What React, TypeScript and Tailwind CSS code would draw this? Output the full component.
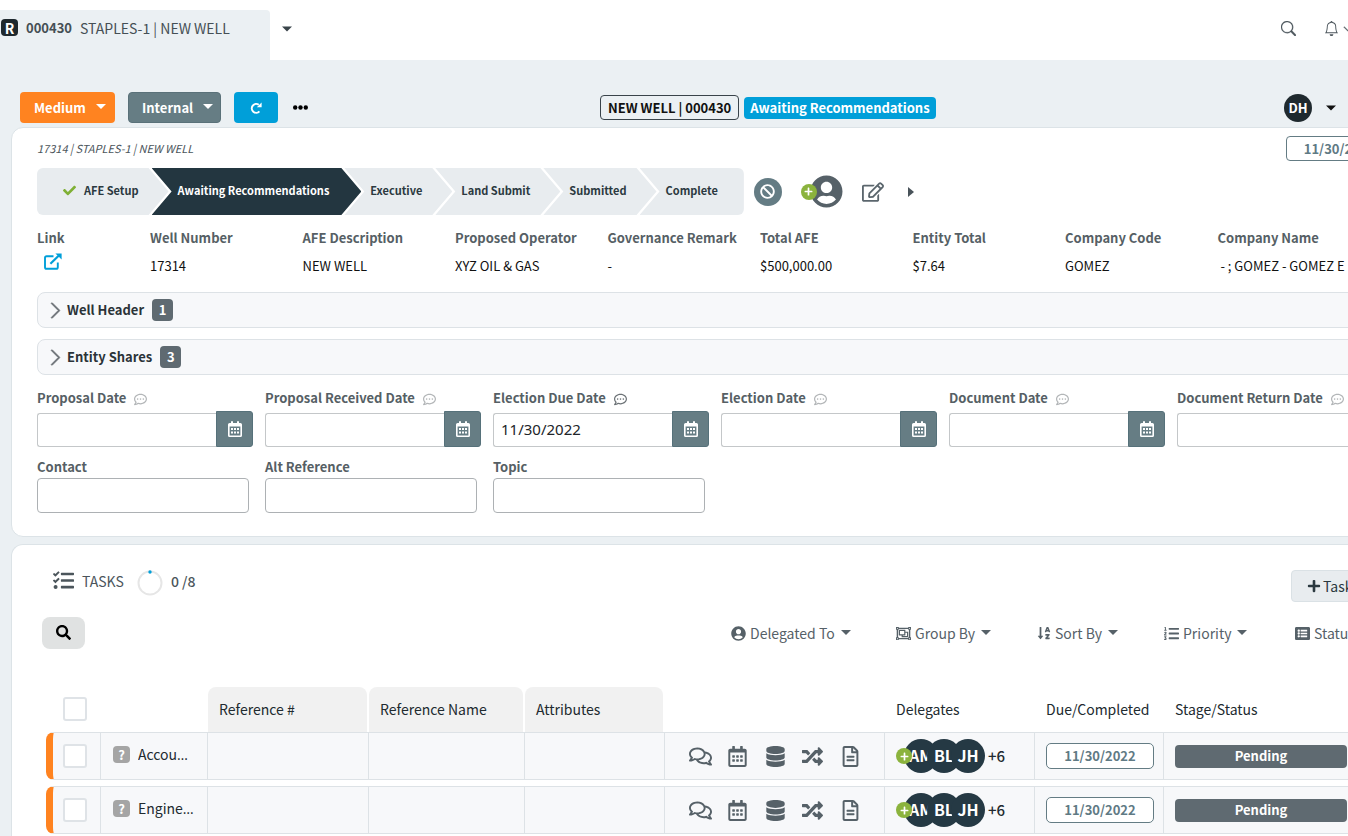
import React from "react";
import {
  FaBan, FaCheck, FaDatabase, FaListAlt, FaListOl, FaPlus, FaRandom, FaRegCalendarAlt, FaRegCommentDots,
  FaRegComments, FaRegEdit, FaRegFileAlt, FaRegObjectGroup, FaSearch, FaSortAlphaDown, FaTasks, FaUserCircle,
} from "react-icons/fa";
import { BsBell, BsChevronDown, BsChevronRight, BsSearch } from "react-icons/bs";

const Caret = ({ className = "" }: { className?: string }) => (
  <svg viewBox="0 0 10 5" className={`h-[5px] w-[10px] shrink-0 fill-current ${className}`} aria-hidden="true">
    <path d="M0 0h10L5 5z" />
  </svg>
);

const RotateIcon = () => (
  <svg viewBox="0 0 12 12" className="h-3 w-3" fill="none" stroke="currentColor" strokeWidth="2" aria-hidden="true">
    <path d="M9.4 9.4A4.4 4.4 0 1 1 8.8 2.8" />
    <path d="M11.6 .4v4.8H6.8z" fill="currentColor" stroke="none" />
  </svg>
);

const ExternalIcon = () => (
  <svg viewBox="0 0 18 17" className="h-[17px] w-[18px]" fill="none" stroke="currentColor" strokeWidth="1.9" aria-hidden="true">
    <path d="M9.5 3.2H2.6Q1 3.2 1 4.8v9.4q0 1.6 1.6 1.6h9.6q1.6 0 1.6-1.6V9.4" />
    <path d="M6.4 10.8 15.4 2" strokeWidth="2.2" />
    <path d="M11.4.4H17.6V6.4z" fill="currentColor" stroke="none" />
  </svg>
);

const CalendarIcon = () => (
  <svg viewBox="0 0 14 16" className="h-4 w-[14px]" aria-hidden="true">
    <path
      fill="currentColor"
      fillRule="evenodd"
      d="M3 .3h2V2h4V.3h2V2h1.4Q14 2 14 3.6v10.8q0 1.6-1.6 1.6H1.6Q0 16 0 14.4V3.6Q0 2 1.6 2H3zM1.6 5.6v8.8h10.8V5.6z"
    />
    <path fill="currentColor" d="M3 7h2v2H3zM6 7h2v2H6zM9 7h2v2H9zM3 10.6h2v2H3zM6 10.6h2v2H6zM9 10.6h2v2H9z" />
  </svg>
);

const PlusDot = ({ className = "" }: { className?: string }) => (
  <span className={`flex h-4 w-4 items-center justify-center rounded-full bg-[#8bb33d] text-white ${className}`}>
    <FaPlus size={9} />
  </span>
);

const steps = [
  { name: "AFE Setup", state: "done" },
  { name: "Awaiting Recommendations", state: "current" },
  { name: "Executive", state: "next" },
  { name: "Land Submit", state: "next" },
  { name: "Submitted", state: "next" },
  { name: "Complete", state: "last" },
];

const stepStyle: Record<string, string> = {
  done: "rounded-l-md bg-[#e8ecef] pr-[30px] [clip-path:polygon(0_0,calc(100%-20px)_0,100%_50%,calc(100%-20px)_100%,0_100%)]",
  current:
    "-ml-[17px] bg-[#233640] pr-8 text-white [clip-path:polygon(0_0,calc(100%-20px)_0,100%_50%,calc(100%-20px)_100%,0_100%,20px_50%)]",
  next: "-ml-[17px] bg-[#e8ecef] pr-[30px] [clip-path:polygon(0_0,calc(100%-20px)_0,100%_50%,calc(100%-20px)_100%,0_100%,20px_50%)]",
  last: "-ml-[17px] rounded-r-md bg-[#e8ecef] pr-[26px] [clip-path:polygon(0_0,100%_0,100%_100%,0_100%,20px_50%)]",
};

const facts = [
  ["Well Number", "17314"],
  ["AFE Description", "NEW WELL"],
  ["Proposed Operator", "XYZ OIL & GAS"],
  ["Governance Remark", "-"],
  ["Total AFE", "$500,000.00"],
  ["Entity Total", "$7.64"],
  ["Company Code", "GOMEZ"],
  ["Company Name", "\u00a0- ; GOMEZ - GOMEZ E"],
];

const dates = [
  { label: "Proposal Date", value: "" },
  { label: "Proposal Received Date", value: "" },
  { label: "Election Due Date", value: "11/30/2022" },
  { label: "Election Date", value: "" },
  { label: "Document Date", value: "" },
  { label: "Document Return Date", value: "" },
];

const filters = [
  { label: "Delegated To", icon: <FaUserCircle size={15} />, width: "w-[165px]" },
  { label: "Group By", icon: <FaRegObjectGroup size={15} />, width: "w-[141px]" },
  { label: "Sort By", icon: <FaSortAlphaDown size={14} />, width: "w-[127px]" },
  { label: "Priority", icon: <FaListOl size={15} />, width: "w-[131px]" },
  { label: "Status", icon: <FaListAlt size={15} />, width: "w-[99px]" },
];

const tasks = ["Accounting", "Engineering"];

function Section({ title, count }: { title: string; count: number }) {
  return (
    <button type="button" className="flex h-9 w-full items-center rounded-lg border border-[#dde2e6] bg-[#f7f8fa] pl-2 text-left text-[13px] font-bold">
      <BsChevronRight size={19} className="text-[#6b7176]" strokeWidth={0.8} />
      <span className="ml-0.5 text-[#2b3338]">{title}</span>
      <span className="ml-2 flex h-[22px] w-[21px] items-center justify-center rounded bg-[#5f6a71] text-white">{count}</span>
    </button>
  );
}

function Check({ label }: { label: string }) {
  return (
    <input
      type="checkbox"
      aria-label={label}
      className="block h-6 w-6 appearance-none rounded-[3px] border-2 border-[#dfe3e7] bg-white"
    />
  );
}

function TaskRow({ name }: { name: string }) {
  const cell = "border-y border-r border-[#dde2e6] bg-[#f7f8fa] p-0";
  return (
    <tr className="h-12">
      <td className={`${cell} rounded-l-lg border-l-[7px] border-l-[#ff8320]`}>
        <div className="pl-[10px]"><Check label={`Select ${name}`} /></div>
      </td>
      <td className={cell}>
        <div className="flex items-center gap-2 pr-2 pb-1 pl-3">
          <span className="flex h-[17px] w-[17px] shrink-0 items-center justify-center rounded-sm bg-[#a5a5a5] text-[13px] leading-none font-bold text-white">?</span>
          <span className="w-[57px] truncate font-['Open_Sans',sans-serif] text-[#212a2f]">
            <span className="font-['Noto_Sans_CJK_KR',sans-serif]">{name}</span>
          </span>
        </div>
      </td>
      <td className={cell} />
      <td className={cell} />
      <td className={cell} />
      <td className={cell}>
        <div className="flex items-center text-[#566168]">
          <button type="button" aria-label="Comments" className="ml-[23px] flex w-6 justify-center"><FaRegComments size={23} /></button>
          <button type="button" aria-label="Dates" className="ml-[13px] flex w-6 justify-center"><FaRegCalendarAlt size={21} /></button>
          <button type="button" aria-label="Data" className="ml-[14px] flex w-6 justify-center"><FaDatabase size={21} /></button>
          <button type="button" aria-label="Reassign" className="ml-[13px] flex w-6 justify-center"><FaRandom size={21} /></button>
          <button type="button" aria-label="Documents" className="ml-[14px] flex w-6 justify-center"><FaRegFileAlt size={21} /></button>
        </div>
      </td>
      <td className={cell}>
        <div className="flex items-center pl-[11px] text-base font-bold text-white">
          <PlusDot className="z-10" />
          <span className="-ml-2 flex h-[34px] w-[34px] items-center justify-center rounded-full bg-[#253944] pb-0.5">AM</span>
          <span className="-ml-[11px] flex h-[34px] w-[34px] items-center justify-center rounded-full bg-[#253944] pb-0.5">BL</span>
          <span className="-ml-[10px] flex h-[34px] w-[34px] items-center justify-center rounded-full bg-[#253944] pb-0.5">JH</span>
          <span className="ml-[3px] text-[15px] font-medium text-[#212a2f]">+6</span>
        </div>
      </td>
      <td className={cell}>
        <div className="ml-[11px] flex h-[26px] w-[108px] items-center justify-center rounded-[5px] border border-[#647c84] bg-white text-[13px] font-bold text-[#5f7a84]">11/30/2022</div>
      </td>
      <td className={cell}>
        <div className="ml-[11px] flex h-[23px] w-[172px] items-center justify-center rounded bg-[#5f6a71] text-[13px] font-bold text-white">Pending</div>
      </td>
    </tr>
  );
}

export default function App() {
  return (
    <div className="min-h-screen w-full overflow-hidden bg-[#ebf0f3] font-['Noto_Sans_CJK_KR','Source_Sans_Pro',sans-serif] text-sm leading-5 text-[#111]">
      <div className="min-w-[1408px]">
        <header className="flex h-[60px] items-end justify-between bg-white">
          <div className="flex items-center self-end">
            <a href="#record" className="flex h-[50px] w-[270px] items-start rounded-tr bg-[#ebf0f3] pt-[9px] text-[#454f55]">
              <span className="ml-px flex h-[17px] w-[17px] items-center justify-center rounded-sm bg-[#1f292e] font-bold text-white">R</span>
              <span className="-mt-px ml-2 text-[13px] font-bold">000430</span>
              <span className="-mt-px ml-2">STAPLES-1 | NEW WELL</span>
            </a>
            <button type="button" aria-label="Open tabs" className="mb-3 ml-3 text-[#39444a]"><Caret className="h-[6px]" /></button>
          </div>
          <div className="mr-[55px] mb-6 flex items-center text-[#4c565c]">
            <button type="button" aria-label="Search"><BsSearch size={15} strokeWidth={0.3} /></button>
            <button type="button" aria-label="Notifications" className="ml-7 flex items-center gap-1"><BsBell size={15} /><BsChevronDown size={10} strokeWidth={1} /></button>
          </div>
        </header>

        <div className="flex h-[67px] items-center pt-7 pl-5">
          <div className="flex w-[580px] shrink-0 items-center text-[13px] font-bold text-white">
            <button type="button" className="flex h-[31px] w-[95px] items-center gap-[10px] rounded-sm bg-[#ff8320] pl-[14px]">Medium<Caret className="-mt-0.5" /></button>
            <button type="button" className="ml-[13px] flex h-[31px] w-[93px] items-center gap-[10px] rounded-sm border border-[#5a7179] bg-[#667d84] pl-[13px]">Internal<Caret className="-mt-0.5" /></button>
            <button type="button" aria-label="Refresh" className="ml-[13px] flex h-[31px] w-11 items-center justify-center rounded-sm bg-[#009fd9]"><RotateIcon /></button>
            <button type="button" aria-label="More" className="ml-[15px] flex gap-px text-black">
              <svg viewBox="0 0 15 5" className="h-[5px] w-[15px] fill-current"><circle cx="2.2" cy="2.5" r="2.2" /><circle cx="7.5" cy="2.5" r="2.2" /><circle cx="12.8" cy="2.5" r="2.2" /></svg>
            </button>
          </div>
          <div className="flex items-center gap-[5px] text-[13px] font-bold whitespace-nowrap">
            <span className="flex h-[25px] items-center rounded border border-[#39434a] px-[7px]">NEW WELL | 000430</span>
            <span className="flex h-[22px] items-center rounded bg-[#009fd9] px-[6px] text-white">Awaiting Recommendations</span>
          </div>
          <div className="mr-[72px] ml-auto flex items-center gap-[14px]">
            <span className="flex h-7 w-7 items-center justify-center rounded-full bg-[#1f292e] text-[13px] font-bold text-white">DH</span>
            <button type="button" aria-label="User menu"><Caret className="h-[6px]" /></button>
          </div>
        </div>

        <main className="ml-[11px] flex flex-col gap-[7px]">
          <section className="h-[410px] rounded-xl border border-[#dce3e7] bg-white pr-[14px] pl-[25px]">
            <div className="flex h-10 items-start justify-between">
              <p className="mt-[10px] text-[11px] leading-5 text-[#4b555b] italic">17314 | STAPLES-1 | NEW WELL</p>
              <div className="mt-2 flex h-[25px] w-[107px] items-center justify-center rounded border border-[#647c84] text-[13px] font-bold text-[#5f7a84]">11/30/2022</div>
            </div>
            <div className="flex items-center">
              <ol className="flex h-[47px] text-[11px] font-bold whitespace-nowrap text-[#2b3940]">
                {steps.map((s) => (
                  <li key={s.name} className={`flex items-center pb-[3px] pl-[26px] ${stepStyle[s.state]}`}>
                    {s.state === "done" && <FaCheck size={13} className="mr-2 text-[#7fb035]" />}
                    {s.name}
                  </li>
                ))}
              </ol>
              <button type="button" aria-label="Cancel" className="ml-[10px] flex h-7 w-7 items-center justify-center rounded-full bg-[#647c84] text-white"><FaBan size={15} /></button>
              <button type="button" aria-label="Add delegate" className="ml-[19px] flex items-center text-[#566168]">
                <PlusDot className="z-10" />
                <FaUserCircle size={33} className="-ml-[7px]" />
              </button>
              <button type="button" aria-label="Edit" className="ml-[19px] text-[#5b666d]"><FaRegEdit size={22} /></button>
              <button type="button" aria-label="Expand" className="ml-6 text-[#49535a]">
                <svg viewBox="0 0 6 10" className="h-[10px] w-[6px] fill-current"><path d="M0 0v10l6-5z" /></svg>
              </button>
            </div>
            <dl className="mt-[13px] grid grid-cols-[113px_repeat(8,minmax(0,1fr))] pr-[23px]">
              <div>
                <dt className="text-[13px] font-bold text-[#565f65]">Link</dt>
                <dd className="mt-[5px] ml-[7px] text-[#009fd9]"><a href="#well" aria-label="Open link"><ExternalIcon /></a></dd>
              </div>
              {facts.map(([k, v]) => (
                <div key={k} className="whitespace-nowrap">
                  <dt className="text-[13px] font-bold text-[#565f65]">{k}</dt>
                  <dd className="mt-2 text-[13px]">{v}</dd>
                </div>
              ))}
            </dl>
            <div className="mt-4 flex flex-col gap-[11px]">
              <Section title="Well Header" count={1} />
              <Section title="Entity Shares" count={3} />
            </div>
            <div className="mt-[13px] grid grid-cols-6 gap-3">
              {dates.map((d) => (
                <div key={d.label}>
                  <label htmlFor={d.label} className="flex items-center gap-2 text-[13px] font-bold text-[#565f65]">
                    {d.label}
                    <FaRegCommentDots size={13} className={d.value ? "mt-0.5 text-[#6c7276]" : "mt-0.5 text-[#b3b6b8]"} />
                  </label>
                  <div className="mt-[3px] flex items-end">
                    <input id={d.label} type="text" defaultValue={d.value} className="h-[34px] min-w-0 flex-1 rounded-l-[3px] border border-r-0 border-[#c4c7c9] bg-white px-[7px] pb-0.5 font-['Noto_Sans',sans-serif] text-[15px] text-[#212529]" />
                    <button type="button" aria-label={`Pick ${d.label}`} className="flex h-9 w-[37px] items-center justify-center rounded-r-[3px] border border-[#56717a] bg-[#667d84] text-white"><CalendarIcon /></button>
                  </div>
                </div>
              ))}
            </div>
            <div className="mt-[10px] grid grid-cols-6 gap-4 pr-1">
              {["Contact", "Alt Reference", "Topic"].map((l) => (
                <div key={l}>
                  <label htmlFor={l} className="block text-[13px] font-bold text-[#565f65]">{l}</label>
                  <input id={l} type="text" className="mt-px h-[35px] w-full rounded border border-[#adb1b4] bg-white px-2" />
                </div>
              ))}
            </div>
          </section>

          <section className="rounded-tl-xl border-t border-l border-[#dce3e7] bg-white pr-[14px]">
            <div className="flex h-[72px] items-center pl-[41px] text-[#4b555b]">
              <FaTasks size={21} className="-mt-0.5" />
              <h2 className="ml-2">TASKS</h2>
              <svg viewBox="0 0 26 26" className="mt-[3px] ml-[13px] h-[26px] w-[26px]" fill="none" aria-hidden="true">
                <circle cx="13" cy="13" r="11.5" stroke="#e6e6e6" strokeWidth="2" />
                <circle cx="13" cy="2" r="1.7" fill="#009fd9" />
              </svg>
              <span className="ml-2 font-medium">0 /8</span>
              <button type="button" className="mt-[10px] mr-[17px] ml-auto flex h-8 w-[86px] items-center gap-0.5 rounded-sm border border-[#dae1e5] bg-[#e8ecef] pl-[15px] text-[#2b3940]"><FaPlus size={14} />Task</button>
            </div>
            <div className="flex h-8 items-center justify-between pl-[30px]">
              <button type="button" aria-label="Search tasks" className="flex h-8 w-[43px] items-center justify-center rounded-lg bg-[#e0e2e2] pb-0.5 text-black"><FaSearch size={15} /></button>
              <div className="flex text-[#566168]">
                {filters.map((f) => (
                  <div key={f.label} className={f.width}>
                    <button type="button" className="flex items-center gap-1 whitespace-nowrap">{f.icon}{f.label}<Caret className="-mt-0.5 ml-0.5" /></button>
                  </div>
                ))}
              </div>
            </div>
            <table className="mt-8 ml-[34px] w-[1347px] table-fixed border-separate border-spacing-x-0 border-spacing-y-[6px]">
              <colgroup>
                <col className="w-[55px]" /><col className="w-[107px]" /><col className="w-[161px]" /><col className="w-[156px]" /><col className="w-[140px]" />
                <col className="w-[220px]" /><col className="w-[150px]" /><col className="w-[129px]" /><col />
              </colgroup>
              <thead>
                <tr className="text-left text-[#212a2f] [&_th]:p-0 [&_th]:font-normal">
                  <th><div className="pt-1 pl-[17px]"><Check label="Select all tasks" /></div></th>
                  <th />
                  {["Reference #", "Reference Name", "Attributes"].map((h) => (
                    <th key={h}><div className="mr-0.5 -mb-[6px] flex h-[45px] items-center rounded-t-lg bg-[#f1f1f1] pb-0.5 pl-[11px]">{h}</div></th>
                  ))}
                  <th />
                  {["Delegates", "Due/Completed", "Stage/Status"].map((h) => (
                    <th key={h}><div className="-mb-[6px] flex h-[45px] items-center pb-0.5 pl-[11px]">{h}</div></th>
                  ))}
                </tr>
              </thead>
              <tbody>{tasks.map((t) => <TaskRow key={t} name={t} />)}</tbody>
            </table>
          </section>
        </main>
      </div>
    </div>
  );
}
